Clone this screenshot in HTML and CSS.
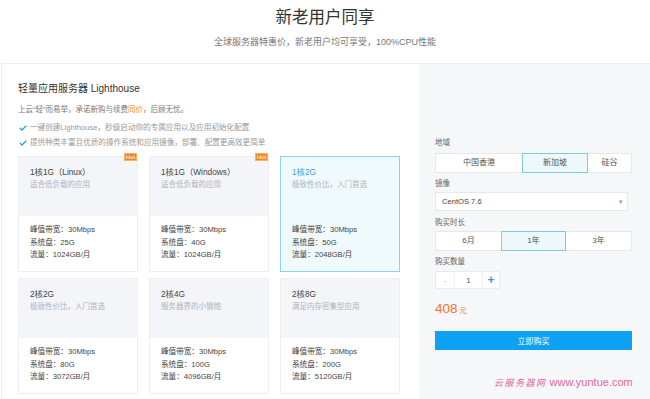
FILE: index.html
```html
<!DOCTYPE html>
<html lang="zh-CN">
<head>
<meta charset="utf-8">
<link rel="stylesheet" href="styles.css">
</head>
<body>
<header class="hero">
  <h1 class="hero-title">新老用户同享</h1>
  <p class="hero-sub">全球服务器特惠价，新老用户均可享受，100%CPU性能</p>
</header>
<main class="main">
  <section class="left">
    <h2 class="prod-title">轻量应用服务器 Lighthouse</h2>
    <p class="prod-desc">上云“轻”而易举，承诺新购与续费<span class="hl">同价</span>，后顾无忧。</p>
    <p class="check"><svg class="tick" viewBox="0 0 8 6" width="8" height="6"><path d="M0.8 3 L3 5 L7.2 0.8" fill="none" stroke="#2a9be0" stroke-width="1.3"/></svg>一键创建Lighthouse，秒级启动你的专属应用以及应用初始化配置</p>
    <p class="check check2"><svg class="tick" viewBox="0 0 8 6" width="8" height="6"><path d="M0.8 3 L3 5 L7.2 0.8" fill="none" stroke="#2a9be0" stroke-width="1.3"/></svg>提供种类丰富且优质的操作系统和应用镜像，部署、配置更高效更简单</p>
    <div class="cards">
      <div class="card">
        <span class="hot">Hot</span>
        <div class="card-top"><div class="card-name">1核1G（Linux）</div><div class="card-sub">适合低负载的应用</div></div>
        <div class="card-spec"><div>峰值带宽：30Mbps</div><div>系统盘：25G</div><div>流量：1024GB/月</div></div>
      </div>
      <div class="card">
        <span class="hot">Hot</span>
        <div class="card-top"><div class="card-name">1核1G（Windows）</div><div class="card-sub">适合低负载的应用</div></div>
        <div class="card-spec"><div>峰值带宽：30Mbps</div><div>系统盘：40G</div><div>流量：1024GB/月</div></div>
      </div>
      <div class="card active">
        <div class="card-top"><div class="card-name">1核2G</div><div class="card-sub">极致性价比，入门首选</div></div>
        <div class="card-spec"><div>峰值带宽：30Mbps</div><div>系统盘：50G</div><div>流量：2048GB/月</div></div>
      </div>
      <div class="card">
        <div class="card-top"><div class="card-name">2核2G</div><div class="card-sub">极致性价比，入门首选</div></div>
        <div class="card-spec"><div>峰值带宽：30Mbps</div><div>系统盘：80G</div><div>流量：3072GB/月</div></div>
      </div>
      <div class="card">
        <div class="card-top"><div class="card-name">2核4G</div><div class="card-sub">服务器界的小钢炮</div></div>
        <div class="card-spec"><div>峰值带宽：30Mbps</div><div>系统盘：100G</div><div>流量：4096GB/月</div></div>
      </div>
      <div class="card">
        <div class="card-top"><div class="card-name">2核8G</div><div class="card-sub">满足内存密集型应用</div></div>
        <div class="card-spec"><div>峰值带宽：30Mbps</div><div>系统盘：200G</div><div>流量：5120GB/月</div></div>
      </div>
    </div>
  </section>
  <aside class="right">
    <div class="label l-region">地域</div>
    <div class="seg seg-region">
      <div class="seg-item w-hk">中国香港</div>
      <div class="seg-item w-sg on">新加坡</div>
      <div class="seg-item w-gu">硅谷</div>
    </div>
    <div class="label l-image">镜像</div>
    <div class="select"><span>CentOS 7.6</span><span class="caret">▾</span></div>
    <div class="label l-time">购买时长</div>
    <div class="seg seg-time">
      <div class="seg-item">6月</div>
      <div class="seg-item on">1年</div>
      <div class="seg-item">3年</div>
    </div>
    <div class="label l-num">购买数量</div>
    <div class="counter">
      <span class="c-minus">-</span><span class="c-val">1</span><span class="c-plus">+</span>
    </div>
    <div class="price"><span class="price-num">408</span><span class="price-unit">元</span></div>
    <button class="buy">立即购买</button>
    <div class="watermark"><span class="wm-cn">云服务器网</span> www.yuntue.com</div>
  </aside>
</main>
</body>
</html>
```

FILE: styles.css
```css
* { box-sizing: border-box; }
html, body { margin: 0; padding: 0; }
body {
  width: 650px;
  height: 399px;
  overflow: hidden;
  background: #fff;
  font-family: "Liberation Sans", Arial, "Noto Sans CJK SC", sans-serif;
  color: #333;
}
.hero { text-align: center; }
.hero-title {
  margin: 0;
  padding-top: 7px;
  font-size: 16.5px;
  line-height: 20px;
  font-weight: normal;
  color: #333;
}
.hero-sub {
  margin: 10px 0 0;
  font-size: 9px;
  line-height: 11px;
  color: #777;
}
.main {
  margin: 15px 0 0 1px;
  display: flex;
  border-top: 1px solid #eceef1;
  border-left: 1px solid #eceef1;
  height: 340px;
}
.left {
  width: 417px;
  padding: 18px 0 0 16px;
  background: #fff;
}
.prod-title {
  margin: 0;
  font-size: 10px;
  line-height: 14px;
  font-weight: normal;
  color: #333;
}
.prod-desc {
  margin: 9px 0 0;
  font-size: 7.5px;
  line-height: 10px;
  color: #777;
}
.hl { color: #f08a24; }
.check {
  margin: 8px 0 0;
  font-size: 7.6px;
  line-height: 10px;
  color: #999;
  display: flex;
  align-items: center;
}
.check2 { margin-top: 5px; }
.tick { margin: 0 3px 0 1px; flex: none; }
.cards {
  margin-top: 8px;
  display: grid;
  grid-template-columns: repeat(3, 120px);
  grid-auto-rows: 116px;
  column-gap: 11px;
  row-gap: 6px;
}
.card {
  position: relative;
  border: 1px solid #eceef2;
  background: #fff;
  display: flex;
  flex-direction: column;
}
.card-top {
  height: 59px;
  background: #f3f5f8;
  padding: 10px 0 0 11px;
}
.card-name {
  font-size: 8.3px;
  line-height: 10px;
  color: #444;
}
.card-sub {
  margin-top: 3px;
  font-size: 7.5px;
  line-height: 10px;
  color: #b0b3b8;
}
.card-spec {
  padding: 8px 0 0 11px;
  font-size: 7.6px;
  line-height: 12.5px;
  color: #444;
}
.card.active {
  border-color: #8dd5e6;
  background: #f0f9fc;
}
.card.active .card-top { background: transparent; }
.card.active .card-name { color: #2ea2d6; }
.hot {
  position: absolute;
  top: -4px;
  right: 0;
  width: 13px;
  height: 8px;
  background: #f0861e;
  color: #fff;
  font-size: 6px;
  line-height: 6px;
  text-align: center;
  border: 1px solid #f7b26a;
}
.right {
  flex: 1;
  background: #f6f7f9;
  padding: 74px 0 0 16px;
  display: flex;
  flex-direction: column;
  align-items: flex-start;
}
.label {
  font-size: 7.5px;
  line-height: 10px;
  color: #666;
}
.l-image { margin-top: 6px; }
.l-time { margin-top: 7px; }
.l-num { margin-top: 6px; }
.seg {
  display: flex;
  width: 197px;
  height: 20px;
  margin-top: 5px;
  background: #fff;
  border: 1px solid #e6e8eb;
}
.seg-time { margin-top: 3px; }
.seg-item {
  flex: 1;
  font-size: 8px;
  line-height: 18px;
  text-align: center;
  color: #555;
  border: 1px solid transparent;
  margin: -1px 0;
}
.seg-region .w-hk { flex: 0 0 86px; }
.seg-region .w-sg { flex: 0 0 66px; }
.seg-region .w-gu { flex: 1; }
.seg-item.on {
  border-color: #7bcfdd;
  background: #eef8fb;
}
.select {
  margin-top: 3px;
  width: 193px;
  height: 19px;
  background: #fff;
  border: 1px solid #e6e8eb;
  display: flex;
  justify-content: space-between;
  align-items: center;
  padding: 0 4px 0 6px;
  font-size: 7.6px;
  color: #444;
}
.caret { font-size: 7px; color: #999; }
.counter {
  margin-top: 4px;
  display: flex;
  height: 18px;
  background: #fff;
  border: 1px solid #e9ebee;
}
.counter span {
  display: flex;
  align-items: center;
  justify-content: center;
  font-size: 8px;
}
.c-minus { width: 19px; color: #aaa; border-right: 1px solid #eef0f2; }
.c-val { width: 28px; color: #555; border-right: 1px solid #eef0f2; }
.c-plus { width: 16px; color: #2a9be0; font-size: 12px !important; font-weight: bold; }
.price {
  margin-top: 11px;
  line-height: 16px;
  color: #f0751e;
}
.price-num { font-size: 13.5px; }
.price-unit { font-size: 7px; margin-left: 2px; }
.buy {
  margin-top: 12px;
  width: 197px;
  height: 19px;
  border: none;
  background: #0ea2f4;
  color: #fff;
  font-family: inherit;
  font-size: 8px;
  padding: 0;
}
.watermark {
  margin-top: 26px;
  margin-left: 59px;
  font-size: 11px;
  line-height: 12px;
  color: #e0679e;
  white-space: nowrap;
}
.wm-cn {
  font-family: "Liberation Serif", "Noto Sans CJK SC", serif;
  font-style: italic;
  font-size: 9px;
  letter-spacing: 1.5px;
}
```
